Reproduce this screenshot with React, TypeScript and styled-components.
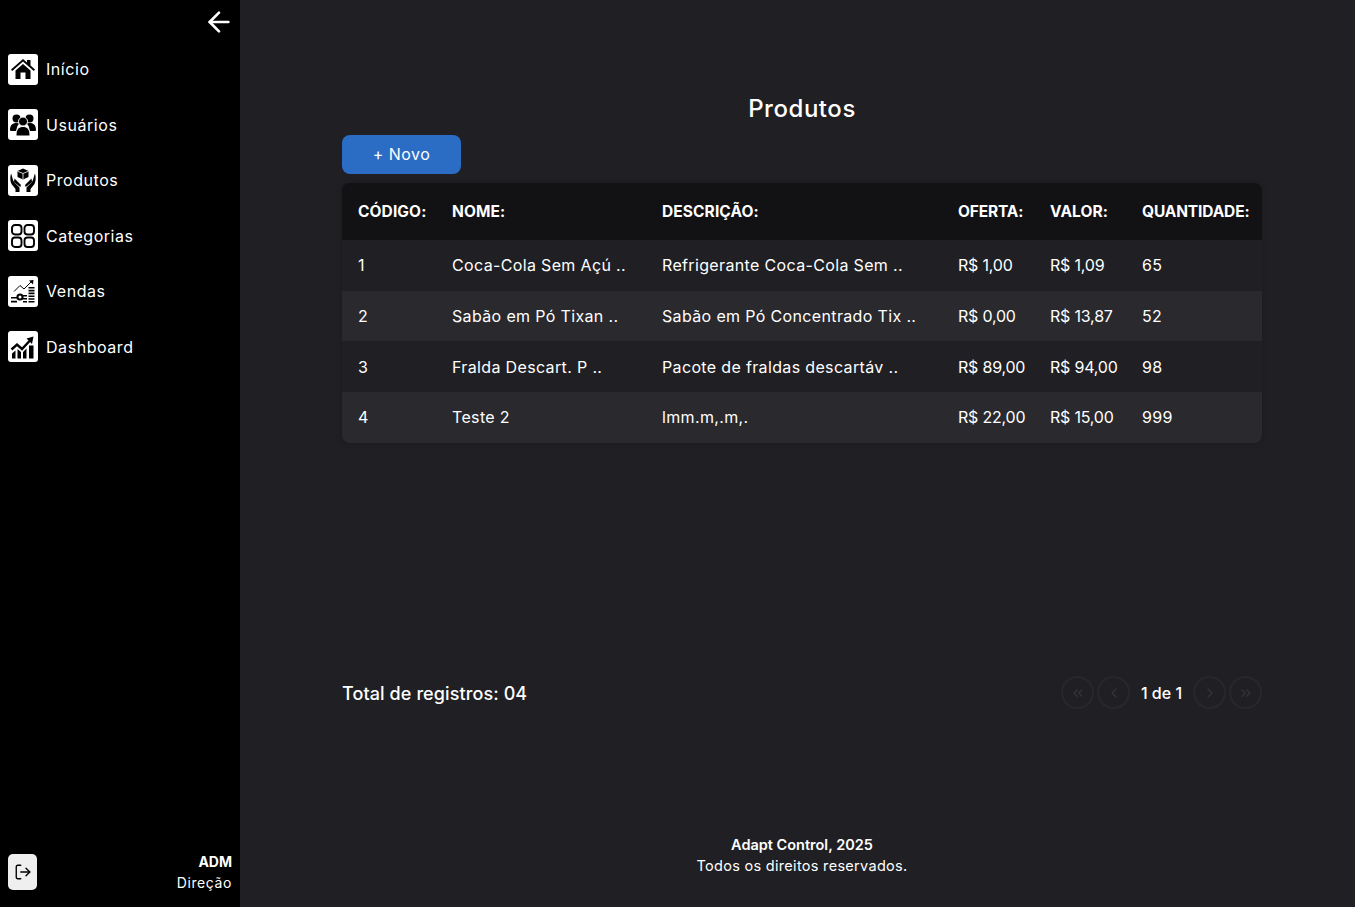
import styled, { createGlobalStyle } from 'styled-components';
import { ArrowLeft, ChevronLeft, ChevronRight, ChevronsLeft, ChevronsRight, LogOut } from 'lucide-react';

const GlobalStyle = createGlobalStyle`
* { box-sizing: border-box; }
html, body { margin: 0; padding: 0; background: #202024; }
body { font-family: Inter, "Open Sans", sans-serif; color: #ffffff; }
`;

const Layout = styled.div`
display: flex;
width: 100%;
height: 907px;
overflow: hidden;
`;

const Sidebar = styled.aside`
width: 240px;
flex-shrink: 0;
background: #000000;
display: flex;
flex-direction: column;
padding: 6px 8px 14px 8px;
`;

const BackButton = styled.button`
align-self: flex-end;
display: flex;
background: none;
border: none;
padding: 0;
margin-right: -3px;
color: #ffffff;
`;

const NavList = styled.nav`
display: flex;
flex-direction: column;
gap: 25.5px;
margin-top: 16px;
flex: 1;
`;

const NavItem = styled.a`
display: flex;
align-items: center;
gap: 8px;
height: 30px;
font-size: 16px;
letter-spacing: 0.55px;
color: #ffffff;
`;

const IconBox = styled.span`
width: 30px;
height: 31px;
border-radius: 3px;
background: #ffffff;
display: flex;
align-items: center;
justify-content: center;
color: #000000;
flex-shrink: 0;
`;

const SideFooter = styled.div`
display: flex;
align-items: center;
justify-content: space-between;
`;

const LogoutButton = styled.button`
width: 29px;
height: 36px;
border-radius: 5px;
border: none;
padding: 0;
background: #efefef;
color: #000000;
display: flex;
align-items: center;
justify-content: center;
`;

const UserInfo = styled.div`
text-align: right;
line-height: 21px;
`;

const UserName = styled.div`
font-size: 14px;
font-weight: 700;
`;

const UserRole = styled.div`
font-size: 14px;
letter-spacing: 0.6px;
`;

const Main = styled.main`
flex: 1;
display: flex;
flex-direction: column;
padding: 93px 93px 0 102px;
`;

const Title = styled.h1`
margin: 0;
height: 32px;
line-height: 32px;
font-size: 24px;
font-weight: 500;
letter-spacing: 0.55px;
text-align: center;
`;

const NewButton = styled.button`
width: 119px;
height: 39px;
margin-top: 10px;
padding: 0 0 2px;
border: none;
border-radius: 8px;
background: #2b6cc4;
color: #ffffff;
font-family: inherit;
font-size: 16px;
letter-spacing: 0.5px;
`;

const TableCard = styled.div`
margin-top: 9px;
border-radius: 8px;
overflow: hidden;
box-shadow: 0 0 6px rgba(0, 0, 0, 0.2);
`;

const Table = styled.table`
width: 920px;
table-layout: fixed;
border-collapse: collapse;
`;

const HeadCell = styled.th<{ $tight?: boolean }>`
height: 57px;
padding: 0 0 0 16px;
background: #121214;
text-align: left;
font-size: 15.5px;
font-weight: 700;
white-space: nowrap;
letter-spacing: ${(p) => (p.$tight ? '-0.15px' : '0.1px')};
`;

const Row = styled.tr<{ $striped: boolean }>`
height: 50.7px;
background: ${(p) => (p.$striped ? '#29292e' : '#202024')};
`;

const Cell = styled.td`
padding: 0 0 0 16px;
font-size: 16px;
letter-spacing: 0.35px;
white-space: nowrap;
`;

const MoneyCell = styled(Cell)`
letter-spacing: -0.2px;
`;

const TableFooter = styled.div`
display: flex;
align-items: center;
justify-content: space-between;
margin-top: 232px;
height: 36px;
`;

const Total = styled.div`
font-size: 18px;
font-weight: 500;
letter-spacing: 0.1px;
padding-top: 1px;
`;

const Pager = styled.div`
display: flex;
align-items: center;
gap: 3px;
`;

const PageButton = styled.button`
width: 33px;
height: 33px;
border-radius: 50%;
border: 2px solid #28282c;
background: transparent;
color: #333338;
padding: 0;
display: flex;
align-items: center;
justify-content: center;
`;

const PageLabel = styled.span`
width: 57px;
text-align: center;
font-size: 16px;
font-weight: 500;
`;

const Footer = styled.footer`
margin-top: 123px;
text-align: center;
font-size: 14.5px;
line-height: 21px;
`;

const FooterBrand = styled.div`
font-weight: 600;
`;

const FooterNote = styled.div`
letter-spacing: 0.3px;
`;

const HomeIcon = () => (
  <svg width="26" height="26" viewBox="0 0 26 26" fill="currentColor">
    <path d="M5.500 14.500 13 8l7.500 6.500V23h-5v-6.500h-5V23h-5z" />
    <path d="M1 13.500 13 3l4 3.500V4h3.500v5.600L25 13.500l-1.200 1.400L13 5.600 2.200 14.900z" />
  </svg>
);

const UsersIcon = () => (
  <svg width="28" height="26" viewBox="0 0 28 26" fill="currentColor">
    <circle cx="7.500" cy="6.500" r="4" />
    <circle cx="20.500" cy="6.500" r="4" />
    <path d="M1 18c0-4.500 2.200-7 6.500-7 1.200 0 2.200.2 3 .6-2 1.500-3 4-3 7.400H2.500C1.500 19 1 18.700 1 18z" />
    <path d="M27 18c0-4.500-2.200-7-6.500-7-1.200 0-2.200.2-3 .6 2 1.500 3 4 3 7.400h5c1 0 1.500-.3 1.500-1z" />
    <circle cx="14" cy="9.500" r="4.500" stroke="#fff" strokeWidth="1" />
    <path d="M8 24c-.6 0-1-.4-1-1 0-5.500 2.300-8.500 7-8.500s7 3 7 8.500c0 .6-.4 1-1 1z" stroke="#fff" strokeWidth="1" />
  </svg>
);

const ProductsIcon = () => (
  <svg width="28" height="28" viewBox="0 0 28 28" fill="currentColor">
    <path d="M14 2.500 19.500 5v6L14 13.500 8.500 11V5z" />
    <path d="M8.500 5.200 14 7.500l5.500-2.300M14 7.500v6" stroke="#fff" strokeWidth=".8" fill="none" />
    <path d="M2 7.500c1.200 2.500 1.500 6 3 8.500l5.500 5.500V26h-4v-3L2.500 18C1 15 1 11 2 7.500z" />
    <path d="M26 7.500c-1.200 2.500-1.500 6-3 8.500l-5.500 5.500V26h4v-3l4-5c1.500-3 1.500-7 .5-10.500z" />
    <path d="M5.500 12.500l6 6 .5 2-1.500 0L5 16z" />
    <path d="M22.500 12.500l-6 6-.5 2 1.500 0L23 16z" />
  </svg>
);

const CategoriesIcon = () => (
  <svg width="26" height="26" viewBox="0 0 26 26" fill="none" stroke="currentColor" strokeWidth="1.900">
    <rect x="2" y="2" width="9.500" height="9.500" rx="3" />
    <rect x="14.500" y="2" width="9.500" height="9.500" rx="3" />
    <rect x="2" y="14.500" width="9.500" height="9.500" rx="3" />
    <rect x="14.500" y="14.500" width="9.500" height="9.500" rx="3" />
  </svg>
);

const SalesIcon = () => (
  <svg width="26" height="26" viewBox="0 0 26 26" fill="currentColor">
    <path d="M4 13.500 10 7.500l4 3.500 7-7" fill="none" stroke="currentColor" strokeWidth="1" />
    <path d="M19 2.500 23.500 2 23 6.500z" />
    <path d="M18.500 9h6v1.600h-6zM18.500 11.800h6v1.600h-6zM18.500 14.600h6v1.600h-6zM18.500 17.400h6V19h-6zM18.500 20.200h6v1.600h-6zM18.500 23h6v1.600h-6z" />
    <path d="M1 19h6v1.600H1zM1 22.800h6v1.800H1zM13 17h4v1.600h-4zM13 20h4v1.600h-4zM13 23h4v1.600h-4z" />
    <circle cx="10" cy="19" r="3.600" />
    <circle cx="10" cy="19" r="1.500" fill="#fff" />
  </svg>
);

const DashboardIcon = () => (
  <svg width="26" height="26" viewBox="0 0 26 26" fill="currentColor">
    <path d="M1.500 15.500 7 10.500l5 4.500 7.500-8" fill="none" stroke="currentColor" strokeWidth="2.400" />
    <path d="M16.500 4.500 23.500 2.500 22 10z" />
    <path d="M2 19.500 5.500 16.500V24.500H2zM7.500 15l3.500 3v6.500H7.500zM13 18l3.500-3.500v10H13zM19 11.500h4.500v13H19z" />
  </svg>
);

const navItems = [
  { label: 'Início', icon: <HomeIcon /> },
  { label: 'Usuários', icon: <UsersIcon /> },
  { label: 'Produtos', icon: <ProductsIcon /> },
  { label: 'Categorias', icon: <CategoriesIcon /> },
  { label: 'Vendas', icon: <SalesIcon /> },
  { label: 'Dashboard', icon: <DashboardIcon /> },
];

const products = [
  { code: '1', name: 'Coca-Cola Sem Açú ..', description: 'Refrigerante Coca-Cola Sem ..', offer: 'R$ 1,00', price: 'R$ 1,09', qty: '65' },
  { code: '2', name: 'Sabão em Pó Tixan ..', description: 'Sabão em Pó Concentrado Tix ..', offer: 'R$ 0,00', price: 'R$ 13,87', qty: '52' },
  { code: '3', name: 'Fralda Descart. P ..', description: 'Pacote de fraldas descartáv ..', offer: 'R$ 89,00', price: 'R$ 94,00', qty: '98' },
  { code: '4', name: 'Teste 2', description: 'lmm.m,.m,.', offer: 'R$ 22,00', price: 'R$ 15,00', qty: '999' },
];

const App = () => {
  return (
    <Layout>
      <GlobalStyle />
      <Sidebar>
        <BackButton>
          <ArrowLeft size={32} strokeWidth={2} />
        </BackButton>
        <NavList>
          {navItems.map((item) => (
            <NavItem key={item.label}>
              <IconBox>{item.icon}</IconBox>
              {item.label}
            </NavItem>
          ))}
        </NavList>
        <SideFooter>
          <LogoutButton>
            <LogOut size={18} strokeWidth={1.8} />
          </LogoutButton>
          <UserInfo>
            <UserName>ADM</UserName>
            <UserRole>Direção</UserRole>
          </UserInfo>
        </SideFooter>
      </Sidebar>
      <Main>
        <Title>Produtos</Title>
        <div>
          <NewButton>+ Novo</NewButton>
        </div>
        <TableCard>
          <Table>
            <colgroup>
              <col width={94} />
              <col width={210} />
              <col width={296} />
              <col width={92} />
              <col width={92} />
              <col width={136} />
            </colgroup>
            <thead>
              <tr>
                <HeadCell>CÓDIGO:</HeadCell>
                <HeadCell>NOME:</HeadCell>
                <HeadCell>DESCRIÇÃO:</HeadCell>
                <HeadCell $tight>OFERTA:</HeadCell>
                <HeadCell>VALOR:</HeadCell>
                <HeadCell $tight>QUANTIDADE:</HeadCell>
              </tr>
            </thead>
            <tbody>
              {products.map((product, index) => (
                <Row key={product.code} $striped={index % 2 === 1}>
                  <Cell>{product.code}</Cell>
                  <Cell>{product.name}</Cell>
                  <Cell>{product.description}</Cell>
                  <MoneyCell>{product.offer}</MoneyCell>
                  <MoneyCell>{product.price}</MoneyCell>
                  <Cell>{product.qty}</Cell>
                </Row>
              ))}
            </tbody>
          </Table>
        </TableCard>
        <TableFooter>
          <Total>Total de registros: 04</Total>
          <Pager>
            <PageButton><ChevronsLeft size={16} /></PageButton>
            <PageButton><ChevronLeft size={16} /></PageButton>
            <PageLabel>1 de 1</PageLabel>
            <PageButton><ChevronRight size={16} /></PageButton>
            <PageButton><ChevronsRight size={16} /></PageButton>
          </Pager>
        </TableFooter>
        <Footer>
          <FooterBrand>Adapt Control, 2025</FooterBrand>
          <FooterNote>Todos os direitos reservados.</FooterNote>
        </Footer>
      </Main>
    </Layout>
  );
};

export default App;
